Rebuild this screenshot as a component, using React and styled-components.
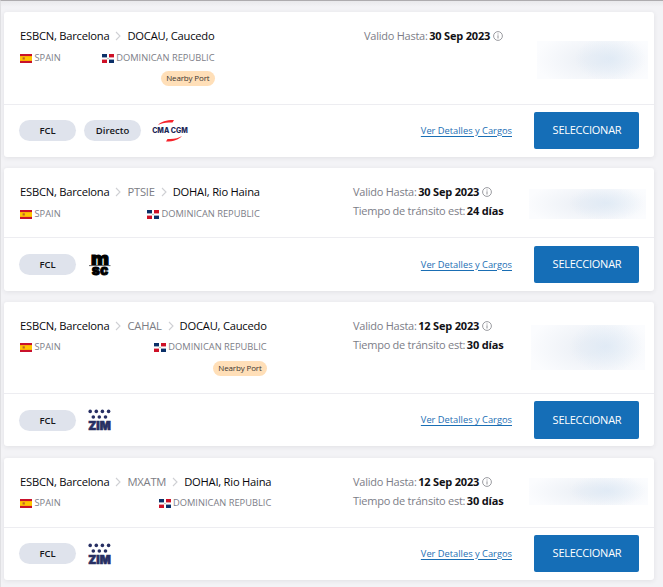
import React from "react";
import styled, { createGlobalStyle } from "styled-components";

const quotes = [
  {
    via: null,
    port: "DOCAU, Caucedo",
    nearby: true,
    valid: "30 Sep 2023",
    transit: null,
    direct: true,
    carrier: "cma",
    headHeight: 92,
    countryGap: 6,
    footHeight: 52,
    footLift: 1,
    datesAt: 360,
    price: { top: 29, width: 111, height: 38, right: 6 },
  },
  {
    via: "PTSIE",
    port: "DOHAI, Rio Haina",
    valid: "30 Sep 2023",
    transit: "24 días",
    carrier: "msc",
    headHeight: 69,
    countryGap: 6,
    footHeight: 53,
    footLift: 0,
    datesAt: 349,
    price: { top: 21, width: 117, height: 30, right: 8 },
  },
  {
    via: "CAHAL",
    port: "DOCAU, Caucedo",
    nearby: true,
    valid: "12 Sep 2023",
    transit: "30 días",
    carrier: "zim",
    headHeight: 91,
    countryGap: 5,
    footHeight: 52,
    footLift: 0,
    datesAt: 349,
    price: { top: 23, width: 114, height: 45, right: 9 },
  },
  {
    via: "MXATM",
    port: "DOHAI, Rio Haina",
    valid: "12 Sep 2023",
    transit: "30 días",
    carrier: "zim",
    headHeight: 69,
    countryGap: 5,
    footHeight: 52,
    footLift: 1,
    datesAt: 349,
    price: { top: 20, width: 119, height: 27, right: 6 },
  },
];

const SpainFlag = () => (
  <Flag viewBox="0 0 12 9">
    <rect width="12" height="9" fill="#c9112b" />
    <rect y="2.1" width="12" height="4.8" fill="#ffc400" />
    <rect x="2.6" y="3.3" width="2.2" height="2.2" fill="#c0602b" />
  </Flag>
);

const DominicanFlag = () => (
  <Flag viewBox="0 0 12 9">
    <rect width="12" height="9" fill="#fff" />
    <rect width="5" height="3.4" fill="#0b3068" />
    <rect x="7" width="5" height="3.4" fill="#ce1127" />
    <rect y="5.6" width="5" height="3.4" fill="#ce1127" />
    <rect x="7" y="5.6" width="5" height="3.4" fill="#0b3068" />
    <rect x="5.4" y="3.9" width="1.2" height="1.2" fill="#8fae9a" />
  </Flag>
);

const Chevron = () => (
  <ChevronIcon viewBox="0 0 6 10">
    <path d="M1 1l4 4-4 4" fill="none" stroke="#cfd0d4" strokeWidth="1.1" />
  </ChevronIcon>
);

const InfoIcon = () => (
  <Info viewBox="0 0 10 10">
    <circle cx="5" cy="5" r="4.4" fill="none" stroke="#909196" strokeWidth="0.9" />
    <path d="M5 4.3v3.2M5 2.5v1" stroke="#909196" strokeWidth="1" />
  </Info>
);

const CmaLogo = () => (
  <Logo $width={36} $left={11} viewBox="0 0 36 22">
    <path d="M6 5C9 1.5 14 0 22 0L20.5 2.6C14 2 10 3 6 5Z" fill="#f5232b" />
    <path d="M30 16C27 19.5 22 21.5 14 21.5L15.5 18.9C22 19.3 26 18.3 30 16Z" fill="#f5232b" />
    <text x="0.2" y="13.2" fontFamily="Inter" fontWeight="800" fontSize="7" fill="#1e2757" textLength="35.6" lengthAdjust="spacingAndGlyphs">CMA CGM</text>
  </Logo>
);

const MscLogo = () => (
  <Logo $width={22} $left={13} viewBox="0 0 22 22">
    <text x="2" y="10.6" fontFamily="Inter" fontWeight="900" fontSize="17.5" fill="#000" stroke="#000" strokeWidth="1" textLength="18" lengthAdjust="spacingAndGlyphs">m</text>
    <path d="M0 11.6h21.5" stroke="#555" strokeWidth="0.9" />
    <text x="2.8" y="20.6" fontFamily="Inter" fontWeight="900" fontSize="13" fill="#000" stroke="#000" strokeWidth="0.8" textLength="16.4" lengthAdjust="spacingAndGlyphs">sc</text>
  </Logo>
);

const ZimLogo = () => (
  <Logo $width={23} $left={12} viewBox="0 0 23 22">
    <g fill="#272f63">
      {[2.2, 8.3, 14.4, 20.6].map((x) => (
        <circle key={x} cx={x} cy="2.4" r="1.8" />
      ))}
      {[5.3, 11.3, 17.5].map((x) => (
        <circle key={x} cx={x} cy="8" r="1.8" />
      ))}
      <text x="0.3" y="20.9" fontFamily="Inter" fontWeight="900" fontSize="12.4" stroke="#272f63" strokeWidth="0.7" textLength="22.4" lengthAdjust="spacingAndGlyphs">ZIM</text>
    </g>
  </Logo>
);

const logos = { cma: CmaLogo, msc: MscLogo, zim: ZimLogo };

const Quote = ({ quote }) => {
  const CarrierLogo = logos[quote.carrier];
  return (
    <Card>
      <Head $height={quote.headHeight} $datesAt={quote.datesAt}>
        <Route>
          <Ports>
            <Port>ESBCN, Barcelona</Port>
            <Chevron />
            {quote.via && (
              <>
                <Port $muted>{quote.via}</Port>
                <Chevron />
              </>
            )}
            <Port>{quote.port}</Port>
          </Ports>
          <Countries $gap={quote.countryGap}>
            <Country><SpainFlag />SPAIN</Country>
            <Country><DominicanFlag />DOMINICAN REPUBLIC</Country>
          </Countries>
          {quote.nearby && <NearbyTag>Nearby Port</NearbyTag>}
        </Route>
        <Dates>
          <DateRow>Valido Hasta: <b>{quote.valid}</b><InfoIcon /></DateRow>
          {quote.transit && <DateRow>Tiempo de tránsito est: <b>{quote.transit}</b></DateRow>}
        </Dates>
        <HiddenPrice $box={quote.price} />
      </Head>
      <Foot $height={quote.footHeight} $lift={quote.footLift}>
        <Pill>FCL</Pill>
        {quote.direct && <Pill>Directo</Pill>}
        <CarrierLogo />
        <DetailsLink>Ver Detalles y Cargos</DetailsLink>
        <SelectButton>SELECCIONAR</SelectButton>
      </Foot>
    </Card>
  );
};

const App = () => (
  <>
    <GlobalStyle />
    <Page>
      {quotes.map((quote, i) => (
        <Quote key={i} quote={quote} />
      ))}
    </Page>
  </>
);

const GlobalStyle = createGlobalStyle`
  * { box-sizing: border-box; }
  body {
    margin: 0;
    overflow: hidden;
    font-family: "Open Sans", "Noto Sans", sans-serif;
  }
`;

const Page = styled.div`
  height: 587px;
  overflow: hidden;
  display: flex;
  flex-direction: column;
  gap: 11px;
  padding: 11px 9px 0 3px;
  border-top: 1px solid #aeacaf;
  border-left: 1px solid #e0e0e3;
  background: linear-gradient(#e9e9ec, #f3f3f6 6px);
`;

const Card = styled.div`
  flex: none;
  background: #fff;
  border-radius: 3px;
  box-shadow: 0 1px 5px rgba(40, 40, 60, 0.09);
  &:nth-child(3) { margin-bottom: 1px; }
`;

const Head = styled.div`
  display: grid;
  grid-template-columns: ${(p) => p.$datesAt - 16}px 1fr auto;
  align-items: start;
  height: ${(p) => p.$height}px;
  padding-left: 16px;
`;

const Route = styled.div`
  justify-self: start;
  display: flex;
  flex-direction: column;
  padding-top: 15px;
`;

const Ports = styled.div`
  display: flex;
  align-items: center;
  height: 18px;
`;

const Port = styled.span`
  font-size: 11.2px;
  letter-spacing: -0.23px;
  line-height: 18px;
  white-space: nowrap;
  color: ${(p) => (p.$muted ? "#7c7d84" : "#08080c")};
`;

const ChevronIcon = styled.svg`
  width: 6px;
  height: 10px;
  margin: 0 6px;
`;

const Countries = styled.div`
  display: flex;
  justify-content: space-between;
  height: ${(p) => 19 - p.$gap}px;
  margin-top: ${(p) => p.$gap}px;
`;

const Country = styled.span`
  display: flex;
  align-items: center;
  height: 14px;
  font-size: 9.3px;
  line-height: 14px;
  white-space: nowrap;
  color: #7c7d87;
`;

const Flag = styled.svg`
  width: 12px;
  height: 9px;
  margin: 1px 2.5px 0 0;
`;

const NearbyTag = styled.span`
  align-self: flex-end;
  height: 15px;
  margin-top: 7px;
  padding: 0 5px;
  border-radius: 8px;
  background: #ffdfb8;
  color: #3c3631;
  font-size: 8px;
  font-weight: 500;
  letter-spacing: -0.15px;
  line-height: 14px;
`;

const Dates = styled.div`
  padding-top: 14px;
`;

const DateRow = styled.div`
  display: flex;
  align-items: center;
  height: 19px;
  font-size: 11px;
  letter-spacing: -0.24px;
  line-height: 19px;
  white-space: pre;
  word-spacing: -0.1px;
  color: #7c7d87;
  b {
    margin-left: -1px;
    letter-spacing: -0.15px;
    color: #111115;
  }
`;

const Info = styled.svg`
  width: 10px;
  height: 10px;
  margin-left: 3px;
`;

const HiddenPrice = styled.div`
  width: ${(p) => p.$box.width}px;
  height: ${(p) => p.$box.height}px;
  margin: ${(p) => p.$box.top}px ${(p) => p.$box.right}px 0 0;
  background:
    radial-gradient(ellipse 32% 60% at 66% 47%, rgba(216, 230, 244, 0.6), rgba(216, 230, 244, 0)),
    radial-gradient(ellipse 54% 78% at 52% 50%, #ecf0f6 15%, #fbfcfe);
`;

const Foot = styled.div`
  display: flex;
  align-items: center;
  height: ${(p) => p.$height + 1}px;
  padding: 0 15px ${(p) => p.$lift}px;
  border-top: 1px solid #ededf1;
`;

const Pill = styled.span`
  width: 57px;
  height: 21px;
  border-radius: 11px;
  background: #dfe3ec;
  color: #15161b;
  font-size: 9.5px;
  font-weight: 600;
  line-height: 21px;
  text-align: center;
  & + & { margin-left: 8px; }
`;

const Logo = styled.svg`
  width: ${(p) => p.$width}px;
  height: 22px;
  margin-left: ${(p) => p.$left}px;
  overflow: visible;
`;

const DetailsLink = styled.a`
  margin: 0 22px 1px auto;
  color: #1a6eb4;
  font-size: 9.3px;
  text-decoration: underline;
  text-underline-offset: 2px;
`;

const SelectButton = styled.button`
  width: 105px;
  height: 37.5px;
  padding: 0 0 2px 1px;
  border: 0;
  border-radius: 2px;
  background: #156eb7;
  color: #fff;
  font-family: inherit;
  font-size: 11px;
  letter-spacing: -0.25px;
`;

export default App;
